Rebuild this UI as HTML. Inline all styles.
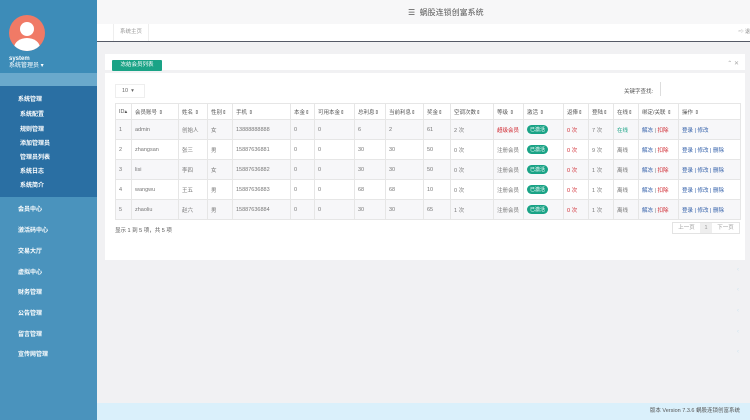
<!DOCTYPE html>
<html><head><meta charset="utf-8"><style>
*{margin:0;padding:0;box-sizing:border-box}
body{width:750px;height:420px;overflow:hidden;font-family:"Liberation Sans","Noto Sans CJK SC",sans-serif;font-size:6px;color:#666;background:#f1f1f3;position:relative}
.sb{position:absolute;left:0;top:0;width:97px;height:420px;background:#4a93bd}
.sbtop{position:absolute;left:0;top:0;width:97px;height:73px;background:#3d8cb8}
.av{position:absolute;left:9px;top:15px;width:36px;height:36px;border-radius:50%;background:#f07a66;overflow:hidden}
.av .h{position:absolute;left:11px;top:7px;width:14px;height:14px;border-radius:50%;background:#fff}
.av .b{position:absolute;left:5px;top:23px;width:26px;height:20px;border-radius:50% 50% 0 0;background:#fff}
.nm{position:absolute;left:9px;top:56px;color:#fff;font-size:6px;line-height:7px;font-weight:bold}
.band{position:absolute;left:0;top:73px;width:97px;height:13px;background:#6aa9cc}
.sec{position:absolute;left:0;top:86px;width:97px;height:111px;background:#2a6fa3}
.it{position:absolute;color:#fff;font-size:6px;font-weight:600}
.ar{position:absolute;right:11px;color:#cfe3ef;font-size:6px}
.hdr{position:absolute;left:97px;top:0;width:653px;height:24px;background:#f7f7f8}
.tabs{position:absolute;left:97px;top:24px;width:653px;height:18px;background:#fff;border-bottom:1px solid #555a66}
.panel{position:absolute;left:105px;top:54px;width:640px;height:206px;background:#fff}
.ptop{position:absolute;left:0;top:0;width:640px;height:19px;border-bottom:3px solid #f1f1f3}
.btn{position:absolute;left:7px;top:6px;width:50px;height:11px;background:#1aa386;color:#fff;font-size:5.5px;line-height:11px;text-align:center;border-radius:1px}
table{position:absolute;left:10px;top:49px;border-collapse:collapse;font-size:5.5px;table-layout:fixed;width:625px}
td,th{border:1px solid #e6e6e6;height:20px;padding:0 3px;text-align:left;font-weight:normal;color:#777;white-space:nowrap;overflow:hidden}
th{height:16px;color:#555}
tr:nth-child(even) td{background:#f7f7f9}
.r{color:#d0262e}.g{color:#1aa386}.bl{color:#2f5da8}
.tag{display:inline-block;background:#1aa386;color:#fff;border-radius:5px;padding:1px 3px;font-size:5px}
.ft{position:absolute;left:97px;top:403px;width:653px;height:17px;background:#daf0fb;font-size:5.5px;color:#555;text-align:right;padding-right:10px;line-height:17px}
</style></head><body>
<div class="sb"></div><div class="sbtop"></div>
<div class="av"><div class="h"></div><div class="b"></div></div>
<div class="nm">system<br><span style="font-weight:normal">系统管理员 ▾</span></div>
<div class="band"></div>
<div class="sec"></div>
<div class="it" style="left:18px;top:94px;font-weight:bold">系统管理</div><div class="ar" style="top:94px">⌄</div>
<div class="it" style="left:20px;top:109px">系统配置</div>
<div class="it" style="left:20px;top:124px">规则管理</div>
<div class="it" style="left:20px;top:138px">添加管理员</div>
<div class="it" style="left:20px;top:152px">管理员列表</div>
<div class="it" style="left:20px;top:166px">系统日志</div>
<div class="it" style="left:20px;top:180px">系统简介</div>
<div class="it" style="left:18px;top:204px">会员中心</div><div class="ar" style="top:204px">‹</div>
<div class="it" style="left:18px;top:225px">激活码中心</div><div class="ar" style="top:225px">‹</div>
<div class="it" style="left:18px;top:246px">交易大厅</div><div class="ar" style="top:246px">‹</div>
<div class="it" style="left:18px;top:267px">虚拟中心</div><div class="ar" style="top:267px">‹</div>
<div class="it" style="left:18px;top:287px">财务管理</div><div class="ar" style="top:287px">‹</div>
<div class="it" style="left:18px;top:308px">公告管理</div><div class="ar" style="top:308px">‹</div>
<div class="it" style="left:18px;top:329px">留言管理</div><div class="ar" style="top:329px">‹</div>
<div class="it" style="left:18px;top:349px">宣传网管理</div><div class="ar" style="top:349px">‹</div>
<div class="hdr"><div style="position:absolute;left:311px;top:7px;font-size:8px;color:#555">☰ &nbsp;蜗股连锁创富系统</div></div>
<div class="tabs"><div style="position:absolute;left:16px;top:0;height:17px;border-left:1px solid #eee;border-right:1px solid #eee;padding:0 6px;line-height:17px;font-size:5.5px;color:#999">系统主页</div><div style="position:absolute;right:0;top:4px;font-size:5px;color:#888">⇨ 退</div></div>
<div class="panel"><div class="ptop"><div class="btn">冻结会员列表</div><div style="position:absolute;right:6px;top:6px;font-size:6px;color:#aaa">⌃ ✕</div></div>
<div style="position:absolute;left:10px;top:30px;width:30px;height:14px;border:1px solid #eee;font-size:5.5px;line-height:12px;padding-left:6px">10 &nbsp;▾</div>
<div style="position:absolute;left:519px;top:33px;font-size:5.5px;color:#555">关键字查找:</div>
<div style="position:absolute;left:555px;top:28px;width:80px;height:14px;border-left:1px solid #ddd"></div>
<table>
<colgroup><col style="width:16px"><col style="width:47px"><col style="width:29px"><col style="width:25px"><col style="width:58px"><col style="width:24px"><col style="width:40px"><col style="width:31px"><col style="width:38px"><col style="width:27px"><col style="width:43px"><col style="width:30px"><col style="width:40px"><col style="width:25px"><col style="width:25px"><col style="width:25px"><col style="width:40px"><col style="width:62px"></colgroup>
<tr><th>ID▴</th><th>会员账号 ⇕</th><th>姓名 ⇕</th><th>性别⇕</th><th>手机 ⇕</th><th>本金⇕</th><th>可用本金⇕</th><th>总利息⇕</th><th>当前利息⇕</th><th>奖金⇕</th><th>空调次数⇕</th><th>等级 ⇕</th><th>激活 ⇕</th><th>返俸⇕</th><th>登陆⇕</th><th>在线⇕</th><th>绑定/关联 ⇕</th><th>操作 ⇕</th></tr>
<tr><td>1</td><td>admin</td><td>创始人</td><td>女</td><td>13888888888</td><td>0</td><td>0</td><td>6</td><td>2</td><td>61</td><td>2 次</td><td class="r">超级会员</td><td><span class="tag">已激活</span></td><td class="r">0 次</td><td>7 次</td><td class="g">在线</td><td><span class="bl">解冻</span> | <span class="r">扣除</span></td><td class="bl">登录 | 修改</td></tr>
<tr><td>2</td><td>zhangsan</td><td>张三</td><td>男</td><td>15887636881</td><td>0</td><td>0</td><td>30</td><td>30</td><td>50</td><td>0 次</td><td>注册会员</td><td><span class="tag">已激活</span></td><td class="r">0 次</td><td>9 次</td><td>离线</td><td><span class="bl">解冻</span> | <span class="r">扣除</span></td><td class="bl">登录 | 修改 | 删除</td></tr>
<tr><td>3</td><td>lisi</td><td>李四</td><td>女</td><td>15887636882</td><td>0</td><td>0</td><td>30</td><td>30</td><td>50</td><td>0 次</td><td>注册会员</td><td><span class="tag">已激活</span></td><td class="r">0 次</td><td>1 次</td><td>离线</td><td><span class="bl">解冻</span> | <span class="r">扣除</span></td><td class="bl">登录 | 修改 | 删除</td></tr>
<tr><td>4</td><td>wangwu</td><td>王五</td><td>男</td><td>15887636883</td><td>0</td><td>0</td><td>68</td><td>68</td><td>10</td><td>0 次</td><td>注册会员</td><td><span class="tag">已激活</span></td><td class="r">0 次</td><td>1 次</td><td>离线</td><td><span class="bl">解冻</span> | <span class="r">扣除</span></td><td class="bl">登录 | 修改 | 删除</td></tr>
<tr><td>5</td><td>zhaoliu</td><td>赵六</td><td>男</td><td>15887636884</td><td>0</td><td>0</td><td>30</td><td>30</td><td>65</td><td>1 次</td><td>注册会员</td><td><span class="tag">已激活</span></td><td class="r">0 次</td><td>1 次</td><td>离线</td><td><span class="bl">解冻</span> | <span class="r">扣除</span></td><td class="bl">登录 | 修改 | 删除</td></tr>
</table>
<div style="position:absolute;left:10px;top:172px;font-size:5.5px;color:#555">显示 1 到 5 项，共 5 项</div>
<div style="position:absolute;left:567px;top:168px;width:68px;height:12px;border:1px solid #e3e3e3;font-size:5.5px;line-height:10px;color:#999;display:flex"><span style="flex:1;text-align:center">上一页</span><span style="width:12px;text-align:center;background:#eee">1</span><span style="flex:1;text-align:center">下一页</span></div>
</div>
<div class="ft">版本 Version 7.3.6 蜗股连锁创富系统</div>
</body></html>
